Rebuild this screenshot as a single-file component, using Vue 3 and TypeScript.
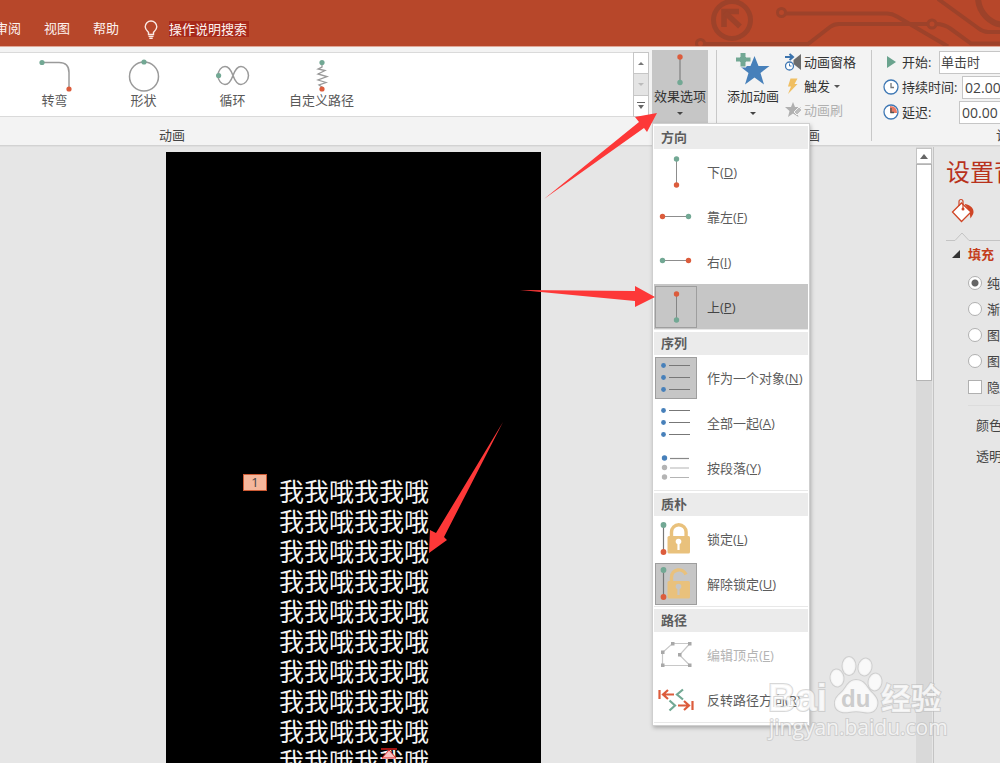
<script setup lang="ts">
import { ref } from 'vue'

type Icon =
  | 'down' | 'left' | 'right' | 'up'
  | 'asOne' | 'together' | 'paragraph'
  | 'lock' | 'unlock' | 'points' | 'reverse'

interface MenuItem {
  icon: Icon
  text: string
  key: string
  checked?: boolean
  active?: boolean
  disabled?: boolean
}

interface MenuSection {
  title: string
  items: MenuItem[]
}

const tabs: string[] = ['审阅', '视图', '帮助']

const sections: MenuSection[] = [
  {
    title: '方向',
    items: [
      { icon: 'down', text: '下', key: 'D' },
      { icon: 'left', text: '靠左', key: 'F' },
      { icon: 'right', text: '右', key: 'I' },
      { icon: 'up', text: '上', key: 'P', checked: true, active: true },
    ],
  },
  {
    title: '序列',
    items: [
      { icon: 'asOne', text: '作为一个对象', key: 'N', checked: true },
      { icon: 'together', text: '全部一起', key: 'A' },
      { icon: 'paragraph', text: '按段落', key: 'Y' },
    ],
  },
  {
    title: '质朴',
    items: [
      { icon: 'lock', text: '锁定', key: 'L' },
      { icon: 'unlock', text: '解除锁定', key: 'U', checked: true },
    ],
  },
  {
    title: '路径',
    items: [
      { icon: 'points', text: '编辑顶点', key: 'E', disabled: true },
      { icon: 'reverse', text: '反转路径方向', key: 'R' },
    ],
  },
]

const slideLines: string[] = Array.from({ length: 10 }, () => '我我哦我我哦')

const fills: string[] = ['纯色填充', '渐变填充', '图片或纹理填充', '图案填充']
const fill = ref<string>(fills[0])
const hideBackground = ref<boolean>(false)
const start = ref<string>('单击时')
const duration = ref<string>('02.00')
const delay = ref<string>('00.00')
</script>

<template>
  <div class="app">
    <header class="titlebar">
      <nav class="tabs">
        <button v-for="tab in tabs" :key="tab" type="button" class="tab">{{ tab }}</button>
      </nav>
      <svg class="bulb" width="16" height="20" viewBox="0 0 16 20" fill="none" stroke="#fbe9e4" stroke-width="1.4">
        <path d="M5.5 14.5v-2.2C4 10.800 2.200 9.500 2.200 6.800a5.800 5.800 0 0 1 11.600 0c0 2.700-1.800 4-3.300 5.500v2.200z" />
        <path d="M5.500 16.400h5M6.300 18.200h3.400" />
      </svg>
      <button type="button" class="tellme">操作说明搜索</button>
      <svg class="circuit" width="310" height="46" viewBox="0 0 310 46" fill="none" stroke="#9d422a" stroke-width="4">
        <circle cx="42" cy="20" r="18.500" stroke-width="5" />
        <path d="M49 11.500H34V27" stroke-width="5.500" />
        <path d="M35 12.500l15 14" stroke-width="5.500" />
        <circle cx="91.500" cy="12.500" r="4" stroke-width="3" />
        <path d="M96 13.500h101q5 0 10 3l51 30" />
        <circle cx="10.500" cy="43.500" r="4" stroke-width="3" />
        <path d="M15 44h103l22-17q4-3 9-3h89" />
        <circle cx="242" cy="24" r="4" stroke-width="3" />
        <path d="M246 24q8 0 15 5l20 14.500h29" />
        <path d="M248-1l40 29q5 4 10 4h12" />
        <circle cx="316" cy="-3" r="28" stroke-width="6" />
        <path d="M313 7l12-12" stroke-width="6" />
      </svg>
    </header>

    <section class="ribbon">
      <div class="group group-anim">
        <div class="group-body">
          <div class="gallery">
            <button type="button" class="effect">
              <svg width="34" height="34" viewBox="0 0 34 34" fill="none" stroke="#9a9a9a" stroke-width="1.500">
                <path d="M4 4.500h17q10 0 10 10V31" />
                <circle cx="4" cy="4.500" r="2.600" fill="#72a894" stroke="none" />
                <circle cx="31" cy="31" r="2.600" fill="#dc5c3c" stroke="none" />
              </svg>
              <span>转弯</span>
            </button>
            <button type="button" class="effect">
              <svg width="34" height="34" viewBox="0 0 34 34" fill="none" stroke="#9a9a9a" stroke-width="1.500">
                <circle cx="17" cy="18.500" r="14.500" />
                <circle cx="17" cy="4" r="2.600" fill="#72a894" stroke="none" />
              </svg>
              <span>形状</span>
            </button>
            <button type="button" class="effect">
              <svg width="34" height="34" viewBox="0 0 34 34" fill="none" stroke="#9a9a9a" stroke-width="1.500">
                <path d="M17 17.500C15 12 12.500 8.500 9 8.500S2 12.500 2 17.500s3.500 9 7 9 6-3.500 8-9 4.500-9 8-9 7.500 4 7.500 9-4 9-7.500 9-6-3.500-8-9z" />
                <circle cx="2.600" cy="17.500" r="2.600" fill="#72a894" stroke="none" />
              </svg>
              <span>循环</span>
            </button>
            <button type="button" class="effect">
              <svg width="34" height="34" viewBox="0 0 34 34" fill="none" stroke="#9a9a9a" stroke-width="1.300">
                <path d="M17 5v4l-4 2 7 1.500-7 3.500 9 2.500-9 3.500 8 2.500-7 2.500 3 2v3" />
                <circle cx="17" cy="4.500" r="2.600" fill="#72a894" stroke="none" />
                <circle cx="17" cy="31" r="2.600" fill="#dc5c3c" stroke="none" />
              </svg>
              <span>自定义路径</span>
            </button>
          </div>
          <div class="gallery-scroll">
            <button type="button" aria-label="上一行"><svg width="6" height="3" viewBox="0 0 6 3"><path d="M0 3l3-3 3 3z" fill="#777" /></svg></button>
            <button type="button" aria-label="下一行" disabled><svg width="6" height="3" viewBox="0 0 6 3"><path d="M0 0l3 3 3-3z" fill="#bbb" /></svg></button>
            <button type="button" aria-label="更多"><svg width="8" height="7" viewBox="0 0 8 7"><path d="M0 0h8v1H0zM1 3h6L4 7z" fill="#666" /></svg></button>
          </div>
          <div class="dropdown">
            <button type="button" class="big pressed" aria-haspopup="menu" aria-expanded="true">
              <svg width="34" height="34" viewBox="0 0 34 34">
                <path d="M17 4v25" stroke="#8d8d8d" stroke-width="1.500" />
                <circle cx="17" cy="4" r="2.700" fill="#dc5c3c" />
                <circle cx="17" cy="29.500" r="2.700" fill="#72a894" />
              </svg>
              <span>效果选项</span>
              <svg class="caret" width="6" height="3" viewBox="0 0 6 3"><path d="M0 0h6L3 3z" fill="#444" /></svg>
            </button>

            <div class="menu" role="menu">
              <section v-for="section in sections" :key="section.title" class="menu-section">
                <h3>{{ section.title }}</h3>
                <button
                  v-for="item in section.items"
                  :key="item.icon"
                  type="button"
                  role="menuitem"
                  class="menu-item"
                  :class="{ active: item.active }"
                  :disabled="item.disabled"
                >
                  <span class="menu-icon" :class="{ checked: item.checked }">
                    <svg width="40" height="40" viewBox="0 0 40 40" fill="none">
                      <g v-if="item.icon === 'down'">
                        <path d="M20.500 7v26" stroke="#8d8d8d" />
                        <circle cx="20.500" cy="7" r="2.700" fill="#72a894" />
                        <circle cx="20.500" cy="33" r="2.700" fill="#dc5c3c" />
                      </g>
                      <g v-else-if="item.icon === 'left'">
                        <path d="M7 19.500h25" stroke="#8d8d8d" />
                        <circle cx="6.500" cy="19.500" r="2.700" fill="#dc5c3c" />
                        <circle cx="32.500" cy="19.500" r="2.700" fill="#72a894" />
                      </g>
                      <g v-else-if="item.icon === 'right'">
                        <path d="M7 18.500h25" stroke="#8d8d8d" />
                        <circle cx="6.500" cy="18.500" r="2.700" fill="#72a894" />
                        <circle cx="32.500" cy="18.500" r="2.700" fill="#dc5c3c" />
                      </g>
                      <g v-else-if="item.icon === 'up'">
                        <path d="M20.500 7v26" stroke="#858585" />
                        <circle cx="20.500" cy="7" r="2.700" fill="#dc5c3c" />
                        <circle cx="20.500" cy="33" r="2.700" fill="#72a894" />
                      </g>
                      <g v-else-if="item.icon === 'asOne' || item.icon === 'together'">
                        <path d="M13 7.500h21M13 19.500h21M13 31.500h21" stroke="#777" stroke-width="1.200" />
                        <circle cx="7.500" cy="7.500" r="2.400" fill="#4780ba" />
                        <circle cx="7.500" cy="19.500" r="2.400" fill="#4780ba" />
                        <circle cx="7.500" cy="31.500" r="2.400" fill="#4780ba" />
                      </g>
                      <g v-else-if="item.icon === 'paragraph'">
                        <path d="M14 10.500h19" stroke="#888" stroke-width="1.200" />
                        <path d="M14 20h19M14 29.500h19" stroke="#b4b4b4" stroke-width="1.200" />
                        <circle cx="8.500" cy="10" r="2.700" fill="#4780ba" />
                        <circle cx="8.500" cy="19.500" r="2.700" fill="#b4b4b4" />
                        <circle cx="8.500" cy="29" r="2.700" fill="#b4b4b4" />
                      </g>
                      <g v-else-if="item.icon === 'lock' || item.icon === 'unlock'">
                        <path d="M7.500 6v27" stroke="#777" stroke-width="1.200" />
                        <circle cx="7.500" cy="6" r="2.900" fill="#72a894" />
                        <circle cx="7.500" cy="33" r="2.900" fill="#dc5c3c" />
                        <rect x="11.500" y="17" width="22.500" height="17.500" rx="1.500" fill="#e9c17c" />
                        <path v-if="item.icon === 'lock'" d="M15.500 18v-5a7.300 7.300 0 0 1 14.600 0v5" stroke="#e9c17c" stroke-width="3.400" />
                        <path v-else d="M15.500 18v-4.500c0-9 11.500-10 14.500-3" stroke="#e9c17c" stroke-width="3.400" />
                        <circle cx="22.500" cy="22.500" r="2.800" :fill="item.checked ? '#c6c6c6' : '#fff'" />
                        <path d="M22.500 23v8" :stroke="item.checked ? '#c6c6c6' : '#fff'" stroke-width="2.200" />
                      </g>
                      <g v-else-if="item.icon === 'points'">
                        <path d="M6.500 30V17.500L16.500 8.500H34L23.500 20 34 30.500H6.500" stroke="#c8c8c8" stroke-width="1.200" />
                        <path d="M5 28.500h3.500V32H5zM5 15.500h3.500V19H5zM15 7h3.500v3.500H15zM32 7h3.500v3.500H32zM22 18h3.500v3.500H22zM32 28.500h3.500V32H32z" fill="#a8a8a8" />
                      </g>
                      <g v-else stroke-width="2.200">
                        <path d="M3.500 10v9M18 14.500H7M12 10l-5 4.500 5 4.500" stroke="#dc5c3c" />
                        <path d="M27 9.500l-6 5 6 5M13.500 20.500l5.500 5-5.500 5" stroke="#72a894" />
                        <path d="M36.500 21v9M22 25.500h11M28 21l5 4.500-5 4.500" stroke="#dc5c3c" />
                      </g>
                    </svg>
                  </span>
                  <span class="menu-text">{{ item.text }}(<u>{{ item.key }}</u>)</span>
                </button>
              </section>
            </div>
          </div>
        </div>
        <div class="group-name">动画</div>
      </div>

      <div class="divider"></div>

      <div class="group group-advanced">
        <div class="group-body">
          <button type="button" class="big">
            <svg width="34" height="34" viewBox="0 0 34 34">
              <path d="M18.500 3l4 10h11l-9 7 3.500 11.500-9.500-7-9.500 7L12.500 20l-9-7h11z" fill="#4780ba" />
              <path d="M-1 4h5v-5h6v5h5v5h-5v5H4V9h-5z" fill="#72a894" stroke="#f3f3f3" />
            </svg>
            <span>添加动画</span>
            <svg class="caret" width="6" height="3" viewBox="0 0 6 3"><path d="M0 0h6L3 3z" fill="#444" /></svg>
          </button>
          <div class="small-list">
            <button type="button" class="small">
              <svg width="18" height="20" viewBox="0 0 18 20" fill="none">
                <path d="M0 5h7M4.500 2L8 5 4.500 8" stroke="#3b73ad" stroke-width="2" />
                <circle cx="4.500" cy="14" r="4" stroke="#3f78b4" stroke-width="1.300" fill="#fff" />
                <path d="M4.500 11.500V14h2" stroke="#3f78b4" />
                <path d="M8.500 8L16 2v16l-7.500-6z" fill="#6c6c6c" />
              </svg>
              <span>动画窗格</span>
            </button>
            <button type="button" class="small">
              <svg width="18" height="20" viewBox="0 0 18 20"><path d="M5.500 2.500h7L9.500 8h3L3 18l3-7.500H3z" fill="#f0bf62" /></svg>
              <span>触发</span>
              <svg class="arrow" width="6" height="3" viewBox="0 0 6 3"><path d="M0 0h6L3 3z" fill="#555" /></svg>
            </button>
            <button type="button" class="small" disabled>
              <svg width="18" height="20" viewBox="0 0 18 20">
                <path d="M8 2l2 5h6l-4.500 4 2 6L8 13.500 3 17l1.500-6L0 7h6z" fill="#b0b0b0" />
                <path d="M9 12l5-5 3 3-5 5z" fill="#bcbcbc" stroke="#f3f3f3" />
              </svg>
              <span>动画刷</span>
            </button>
          </div>
        </div>
        <div class="group-name">高级动画</div>
      </div>

      <div class="divider"></div>

      <div class="group group-timing">
        <div class="timing">
          <div class="timing-row">
            <svg width="16" height="16" viewBox="0 0 16 16"><path d="M4 2l9 6-9 6z" fill="#6aa38e" /></svg>
            <label for="start" class="w-start">开始:</label>
            <select id="start" v-model="start"><option>单击时</option></select>
          </div>
          <div class="timing-row">
            <svg width="16" height="16" viewBox="0 0 16 16" fill="#fff" stroke="#3f78b4" stroke-width="1.300">
              <circle cx="8" cy="8" r="7" /><path d="M8 4v4.500h3" fill="none" stroke="#777" />
            </svg>
            <label for="duration" class="w-duration">持续时间:</label>
            <input id="duration" v-model="duration" type="text" />
          </div>
          <div class="timing-row">
            <svg width="16" height="16" viewBox="0 0 16 16" fill="#fff" stroke="#3f78b4" stroke-width="1.300">
              <circle cx="8" cy="8" r="7" />
              <path d="M7 9V2q7 0 7 7z" fill="#e87a64" stroke="none" />
              <path d="M8 4v4.500h3" fill="none" stroke="#555" />
            </svg>
            <label for="delay" class="w-delay">延迟:</label>
            <input id="delay" v-model="delay" type="text" />
          </div>
        </div>
        <div class="group-name">计时</div>
      </div>
    </section>

    <main class="workspace">
      <div class="canvas">
        <article class="slide">
          <span class="anim-badge">1</span>
          <p v-for="(line, i) in slideLines" :key="i">{{ line }}</p>
          <svg class="path-end" width="18" height="12" viewBox="0 0 18 12">
            <path d="M1 1h16" stroke="#a01414" stroke-width="2" />
            <path d="M9 2l7 8H2z" fill="#f8c0c0" stroke="#e02828" />
          </svg>
        </article>
      </div>

      <div class="scrollbar">
        <button type="button" aria-label="向上滚动"><svg width="8" height="5" viewBox="0 0 8 5"><path d="M0 5l4-5 4 5z" fill="#666" /></svg></button>
        <div class="thumb"></div>
      </div>

      <aside class="pane">
        <h2>设置背景格式</h2>
        <svg class="bucket" width="24" height="26" viewBox="0 0 24 26">
          <path d="M14 6c6 1 9 5 8.500 8.500-.3 2-1.500 3.500-3 6-.5-4-.5-8-5.500-13.500z" fill="#cf4526" />
          <path d="M10.500 5L20 14l-9.500 9.500L1.500 14z" fill="#fff" stroke="#cf4526" stroke-width="1.300" />
          <path d="M8 8V3.500a2 2 0 0 1 4 0V11" fill="none" stroke="#cf4526" stroke-width="1.200" />
          <circle cx="12" cy="11" r="1.500" fill="#cf4526" />
        </svg>
        <svg class="notch" width="100" height="10" viewBox="0 0 100 10" fill="none"><path d="M0 8.500h9l7-7.500 7 7.500h77" stroke="#c4c4c4" /></svg>
        <button type="button" class="fold">
          <svg width="8" height="8" viewBox="0 0 8 8"><path d="M8 0v8H0z" fill="#333" /></svg>
          <span>填充</span>
        </button>
        <div class="options">
          <label v-for="name in fills" :key="name" class="option">
            <input v-model="fill" type="radio" name="fill" :value="name" />
            <span>{{ name }}</span>
          </label>
          <label class="option">
            <input v-model="hideBackground" type="checkbox" />
            <span>隐藏背景图形</span>
          </label>
        </div>
        <div class="props">
          <div>颜色</div>
          <div>透明度</div>
        </div>
      </aside>
    </main>

    <svg class="marks" fill="#fd3838">
      <path d="M544 199L639 122 635 117 657 113 647 132 644 128z" />
      <path d="M520 290L635 291V286L655 297 635 307V301z" />
      <path d="M503 422L444 537 447 540 429 553 430 530 436 533z" />
    </svg>

    <svg class="watermark" width="190" height="100" viewBox="0 0 190 100">
      <g class="wm-shape">
        <text x="6" y="60" class="wm-bai">Bai</text>
        <ellipse cx="75" cy="27" rx="6.500" ry="8.500" transform="rotate(-8 75 27)" />
        <ellipse cx="87" cy="15" rx="6.500" ry="9" />
        <ellipse cx="103" cy="16" rx="6.500" ry="8.500" transform="rotate(12 103 16)" />
        <ellipse cx="113" cy="31" rx="6.500" ry="8.500" transform="rotate(10 113 31)" />
        <path d="M94 29c8 0 10 6 14 11 4 4 9 8 7 15-2 7-9 7-14 6-5-1-9-1-14 0-5 1-13 0-14-7-1-7 4-10 8-14 4-5 6-11 13-11z" />
        <text x="119" y="58" class="wm-cn">经验</text>
        <text x="7" y="84" class="wm-url">jingyan.baidu.com</text>
      </g>
      <text x="79" y="56" class="wm-du">du</text>
    </svg>
  </div>
</template>

<style>
html,
body {
  margin: 0;
}
</style>

<style scoped>
.app {
  position: relative;
  display: flex;
  flex-direction: column;
  height: 100vh;
  overflow: hidden;
  background: #e6e6e6;
  color: #444;
  font-family: "Open Sans", "Noto Sans CJK SC", sans-serif;
  font-size: 13px;
  line-height: 16px;
}

.app *,
.app *::before {
  box-sizing: border-box;
}

button {
  margin: 0;
  padding: 0;
  border: 0;
  background: none;
  color: inherit;
  font: inherit;
  white-space: nowrap;
}

svg {
  display: block;
  flex: none;
}

/* title bar */
.titlebar {
  flex: none;
  display: flex;
  align-items: flex-start;
  height: 47px;
  background: #b7472a;
  border-bottom: 1px solid #e0a898;
  color: #fdf3f0;
  overflow: hidden;
}

.tabs {
  display: flex;
  gap: 23px;
  margin-left: -5px;
  padding-top: 20px;
}

.bulb {
  margin: 20px 10px 0 24px;
}

.tellme {
  margin-top: 21px;
  padding-right: 2px;
  background: #a82a1b;
}

.circuit {
  margin-left: auto;
}

/* ribbon */
.ribbon {
  position: relative;
  z-index: 2;
  flex: none;
  display: flex;
  height: 99px;
  background: #f3f3f3;
  border-bottom: 1px solid #d2d2d2;
}

.group {
  display: flex;
  flex-direction: column;
}

.group-anim {
  flex: 1;
  min-width: 0;
}

.group-advanced {
  width: 154px;
}

.group-timing {
  width: 128px;
  overflow: hidden;
}

.divider {
  width: 1px;
  margin: 3px 0 4px;
  background: #c8c8c8;
}

.group-body {
  display: flex;
  height: 78px;
}

.group-name {
  line-height: 20px;
  white-space: nowrap;
}

.group-anim .group-name {
  padding-left: 159px;
}

.group-advanced .group-name {
  text-align: center;
}

.group-timing .group-name {
  padding-left: 124px;
}

.gallery {
  flex: 1;
  display: flex;
  height: 65px;
  margin-top: 5px;
  padding: 5px 0 0 10px;
  background: #fff;
  border: solid #dadada;
  border-width: 1px 0;
  color: #595959;
}

.effect {
  display: flex;
  flex-direction: column;
  align-items: center;
  width: 89px;
}

.gallery-scroll {
  display: flex;
  flex-direction: column;
  width: 16px;
  height: 65px;
  margin-top: 5px;
  border: 1px solid #c6c6c6;
  background: #fff;
}

.gallery-scroll button {
  flex: 1;
  display: flex;
  align-items: center;
  justify-content: center;
}

.gallery-scroll button + button {
  border-top: 1px solid #c6c6c6;
}

.gallery-scroll button:disabled {
  background: #e4e4e4;
}

.dropdown {
  position: relative;
  margin: 3px 8px 0 3px;
}

.big {
  display: flex;
  flex-direction: column;
  align-items: center;
  width: 56px;
  height: 74px;
  padding-top: 3px;
  color: #333;
}

.big span {
  margin-top: 1px;
}

.big.pressed {
  background: #c6c6c6;
}

.caret {
  margin-top: 8px;
}

.group-advanced .group-body {
  padding: 3px 0 0 8px;
}

.small-list {
  margin-left: 4px;
}

.small {
  display: flex;
  align-items: center;
  height: 24px;
  gap: 1px;
  color: #333;
}

.small:disabled {
  color: #b0b0b0;
}

.arrow {
  margin-left: 3px;
}

.timing {
  height: 78px;
  padding: 3px 0 0 11px;
}

.timing-row {
  display: flex;
  align-items: center;
  height: 24px;
  margin-bottom: 1px;
  color: #333;
}

.timing-row label {
  flex: none;
  margin-left: 3px;
  white-space: nowrap;
}

.w-start {
  width: 37px;
}

.w-duration {
  width: 60px;
}

.w-delay {
  width: 57px;
}

.timing-row input,
.timing-row select {
  flex: none;
  width: 80px;
  height: 23px;
  margin: 0;
  padding: 0 2px;
  border: 1px solid #c6c6c6;
  border-radius: 0;
  background: #fff;
  color: #444;
  font: inherit;
  appearance: none;
}

.timing-row select {
  padding: 0 1px;
}

.timing-row input {
  font-size: 14px;
}

/* effect options menu */
.menu {
  position: absolute;
  top: 73px;
  left: 0;
  z-index: 3;
  width: 158px;
  padding: 0 1px 2px;
  border: 1px solid #cfcfcf;
  background: #fff;
  box-shadow: 1px 2px 4px rgba(0, 0, 0, 0.25);
  color: #5c5c5c;
}

.menu-section {
  padding-top: 2px;
  border-top: 1px solid #e8e8e8;
}

.menu-section:first-child {
  border-top: 0;
}

.menu-section:last-child {
  border-bottom: 1px solid #e8e8e8;
}

.menu-section h3 {
  margin: 0;
  padding-left: 7px;
  background: #ebebeb;
  color: #5c5c5c;
  font-size: 13px;
  font-weight: 700;
  line-height: 23px;
}

.menu-item {
  display: flex;
  align-items: center;
  gap: 10px;
  width: 100%;
  height: 45px;
  padding-left: 1px;
}

.menu-item.active {
  background: #c6c6c6;
  color: #444;
}

.menu-item:disabled {
  color: #b4b4b4;
}

.menu-icon {
  flex: none;
  border: 1px solid transparent;
}

.menu-icon.checked {
  border-color: #9e9e9e;
  background: #c6c6c6;
}

/* workspace */
.workspace {
  flex: 1;
  min-height: 0;
  display: flex;
  border-top: 1px solid #dedede;
}

.canvas {
  flex: 1;
  min-width: 0;
  padding: 5px 0 0 166px;
  overflow: hidden;
}

.slide {
  position: relative;
  width: 375px;
  min-height: 100%;
  padding: 324px 0 0 113px;
  background: #000;
  color: #f4f4f4;
  font-size: 25px;
  line-height: 30px;
}

.slide p {
  margin: 0;
}

.anim-badge {
  position: absolute;
  top: 322px;
  left: 77px;
  width: 24px;
  height: 17px;
  border: 1px solid #cc5a34;
  background: #f5b79c;
  color: #444;
  font-size: 13px;
  line-height: 14px;
  text-align: center;
}

.path-end {
  position: absolute;
  top: 596px;
  left: 214px;
}

.scrollbar {
  display: flex;
  flex-direction: column;
  width: 18px;
  padding: 1px 1px 0 0;
  background: linear-gradient(to right, #d9d9d9 16px, #e6e6e6 16px);
  border-right: 1px solid #c4c4c4;
}

.scrollbar button {
  display: flex;
  align-items: center;
  justify-content: center;
  height: 16px;
  border: 1px solid #c4c4c4;
  background: #fff;
}

.thumb {
  height: 217px;
  border: 1px solid #b4b4b4;
  background: #fff;
}

.pane {
  width: 66px;
  padding: 9px 0 0 12px;
  overflow: hidden;
  white-space: nowrap;
}

.pane h2 {
  margin: 0;
  color: #b8321c;
  font-size: 24px;
  font-weight: 400;
  line-height: 32px;
}

.bucket {
  margin: 10px 0 0 5px;
}

.notch {
  margin-top: 8px;
}

.fold {
  display: flex;
  align-items: center;
  gap: 8px;
  margin: 4px 0 0 6px;
  color: #c43e1c;
  font-weight: 700;
}

.options {
  display: flex;
  flex-direction: column;
  margin: 8px 0 0 22px;
  padding-bottom: 5px;
  border-bottom: 1px solid #dcdcdc;
}

.option {
  display: flex;
  align-items: center;
  gap: 5px;
  height: 26px;
}

.option input {
  appearance: none;
  flex: none;
  width: 14px;
  height: 14px;
  margin: 0;
  border: 1px solid #b0b0b0;
  background: #fff;
}

.option input[type="radio"] {
  border-radius: 50%;
}

.option input[type="radio"]:checked {
  background: radial-gradient(circle, #666 3px, #fff 4px);
}

.props {
  padding: 4px 0 0 30px;
  line-height: 31px;
}

/* overlays */
.marks {
  position: absolute;
  inset: 0;
  z-index: 5;
  width: 100%;
  height: 100%;
  pointer-events: none;
}

.watermark {
  position: absolute;
  right: 48px;
  bottom: 12px;
  z-index: 6;
  pointer-events: none;
}

.wm-shape {
  fill: rgba(255, 255, 255, 0.75);
  stroke: rgba(190, 190, 190, 0.6);
  stroke-width: 2px;
  paint-order: stroke;
}

.wm-bai {
  font: 700 38px "Liberation Sans", sans-serif;
}

.wm-cn {
  font: 700 30px "Noto Sans CJK SC", sans-serif;
}

.wm-url {
  font: 400 21px "Open Sans", sans-serif;
}

.wm-du {
  fill: #cdcdcd;
  font: 700 24px "Liberation Sans", sans-serif;
}
</style>
